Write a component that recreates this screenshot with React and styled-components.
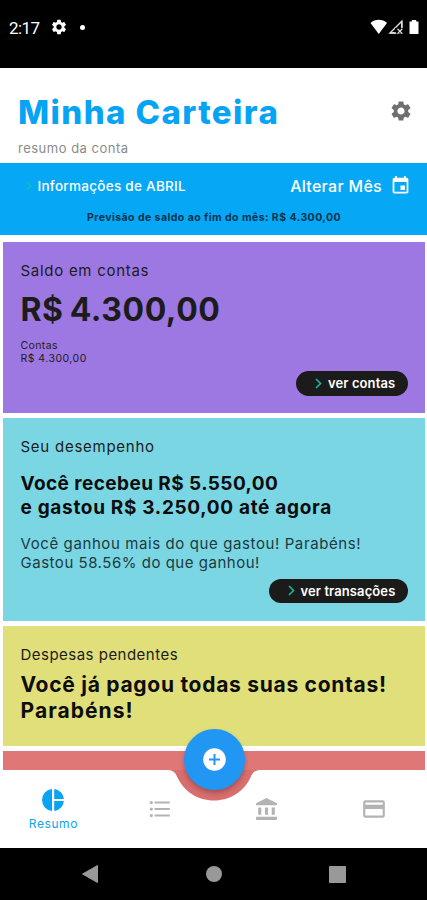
import React from 'react';
import styled, { createGlobalStyle } from 'styled-components';
import {
    MdSettings,
    MdEvent,
    MdFormatListBulleted,
    MdAccountBalance,
    MdCreditCard
} from 'react-icons/md';

const Chevron = ({ color = '#14b48f', width = 7, height = 11 }) => (
    <svg width={width} height={height} viewBox="0 0 7 11" fill="none">
        <path d="M1 1L5.5 5.5L1 10" stroke={color} strokeWidth="1.7"/>
    </svg>
)

const StatusIcons = () => (
    <svg width="52" height="18" viewBox="0 0 52 18">
        <path d="M1.500 5C6 0.800 13.500 0.800 18 5L9.750 16Z" fill="#fff"/>
        <path d="M21 15L32.800 3.200V15Z" fill="none" stroke="#ddd" strokeWidth="1.400"/>
        <path d="M26 15.500V10H34V15.500Z" fill="#000"/>
        <path d="M32.800 3.200V10M21 15H27" stroke="#ddd" strokeWidth="1.400"/>
        <path d="M28.500 10.800L33.300 15.600M33.300 10.800L28.500 15.600" stroke="#ddd" strokeWidth="1.300"/>
        <path d="M40.500 3.500H42.800V2H47.200V3.500H49.500V16H40.500Z" fill="#fff"/>
    </svg>
)

const PieIcon = () => (
    <svg width="22" height="22" viewBox="0 0 22 22" fill="currentColor">
        <path d="M10 0.050V21.950A11 11 0 0 1 10 0.050Z"/>
        <path d="M12.200 0.050A11 11 0 0 1 21.950 9.900H12.200Z"/>
        <path d="M12.200 12.100H21.950A11 11 0 0 1 12.200 21.950Z"/>
    </svg>
)

const PlusIcon = () => (
    <svg width="23" height="23" viewBox="0 0 23 23">
        <circle cx="11.500" cy="11.500" r="11.300" fill="#fff"/>
        <path d="M11.500 6V17M6 11.500H17" stroke="#2296f3" strokeWidth="2"/>
    </svg>
)

const Notch = () => (
    <NotchShape width="92" height="31" viewBox="0 0 92 31">
        <path d="M0 0H92C86 0.500 84.500 3 82.500 7.500C76 21.500 62 30.500 46 30.500C30 30.500 16 21.500 9.500 7.500C7.500 3 6 0.500 0 0Z" fill="#d96e6e"/>
    </NotchShape>
)

const App = () => (
    <Screen>
        <GlobalStyle/>
        <StatusBar>
            <Clock>2:17</Clock>
            <MdSettings size={18}/>
            <Dot/>
            <StatusIcons/>
        </StatusBar>

        <Header>
            <div>
                <Title>Minha Carteira</Title>
                <Subtitle>resumo da conta</Subtitle>
            </div>
            <MdSettings size={24} color="#6f6f6f"/>
        </Header>

        <MonthBar>
            <MonthRow>
                <Chevron color="#16bfa6" width={6} height={10}/>
                <MonthName>Informações de ABRIL</MonthName>
                <ChangeMonth>Alterar Mês</ChangeMonth>
                <MdEvent size={21}/>
            </MonthRow>
            <Forecast>Previsão de saldo ao fim do mês: R$ 4.300,00</Forecast>
        </MonthBar>

        <Cards>
            <Card color="#9d78e2" height={170.5}>
                <CardTitle spacing={0.72}>Saldo em contas</CardTitle>
                <Balance>R$ 4.300,00</Balance>
                <Account spacing={0.4}>Contas</Account>
                <Account spacing={0.47}>R$ 4.300,00</Account>
                <CardButton top={6} width={112}>
                    <Chevron/>
                    <ButtonText spacing={0.1}>ver contas</ButtonText>
                </CardButton>
            </Card>
            <Card color="#7bd6e3" height={202.5}>
                <CardTitle spacing={0.75}>Seu desempenho</CardTitle>
                <Performance>
                    <Strong size={19} spacing={0.42} line={24.5}>Você recebeu R$ 5.550,00</Strong>
                    <Strong size={19} spacing={0.68} line={24.5}>e gastou R$ 3.250,00 até agora</Strong>
                </Performance>
                <Detail spacing={0.6}>Você ganhou mais do que gastou! Parabéns!</Detail>
                <Detail spacing={0.52}>Gastou 58.56% do que ganhou!</Detail>
                <CardButton top={6.5} width={139.5}>
                    <Chevron/>
                    <ButtonText spacing={0.1}>ver transações</ButtonText>
                </CardButton>
            </Card>
            <Card color="#e0df7a" height={119.5}>
                <CardTitle spacing={0.48}>Despesas pendentes</CardTitle>
                <Pending>
                    <Strong size={21} spacing={0.72} line={26}>Você já pagou todas suas contas!</Strong>
                    <Strong size={21} spacing={1.05} line={26}>Parabéns!</Strong>
                </Pending>
            </Card>
            <Card color="#e07777" height={40}/>
        </Cards>

        <TabBar>
            <Notch/>
            <AddButton>
                <PlusIcon/>
            </AddButton>
            <Tab $active>
                <PieIcon/>
                <TabLabel>Resumo</TabLabel>
            </Tab>
            <Tab><MdFormatListBulleted size={26}/></Tab>
            <Tab><MdAccountBalance size={25}/></Tab>
            <Tab><MdCreditCard size={26}/></Tab>
        </TabBar>

        <SystemBar>
            <svg width="18" height="20" viewBox="0 0 18 20">
                <path d="M16.500 1.500V18.500L1.500 10Z" fill="#999" stroke="#999" strokeLinejoin="round"/>
            </svg>
            <Home/>
            <Recents/>
        </SystemBar>
    </Screen>
)

export default App

//////////////////////////////////////////////STYLING COMPONENTS BELOW///////////////////////////////////////////

const GlobalStyle = createGlobalStyle`
    * {
        box-sizing:border-box;
    }
    body {
        margin:0;
        background:#fff;
        font-family:Inter, sans-serif;
    }
    svg {
        display:block;
        flex-shrink:0;
    }
`

const Screen = styled.div`
    width:427px;
    height:900px;
    display:flex;
    flex-direction:column;
    overflow:hidden;
    white-space:nowrap;
    color:#1c1c1c;
`

const StatusBar = styled.div`
    height:67.5px;
    padding:18px 6px 0 9px;
    display:flex;
    align-items:flex-start;
    background:#000;
    color:#fff;
    svg:last-child {
        margin-left:auto;
    }
`

const Clock = styled.span`
    width:40.5px;
    font:400 17px/20px Roboto, sans-serif;
    letter-spacing:-0.6px;
`

const Dot = styled.span`
    width:5px;
    height:5px;
    margin:7px 0 0 12px;
    border-radius:50%;
    background:#fff;
`

const Header = styled.header`
    height:95px;
    padding:24.5px 14px 0 18px;
    display:flex;
    justify-content:space-between;
    align-items:flex-start;
    svg {
        margin-top:7px;
    }
`

const Title = styled.h1`
    margin:0;
    font-size:33px;
    line-height:40px;
    font-weight:800;
    letter-spacing:1.4px;
    color:#08a4f4;
`

const Subtitle = styled.p`
    margin:7px 0 0;
    font-size:13px;
    line-height:18px;
    letter-spacing:0.5px;
    color:#8b8b8b;
`

const MonthBar = styled.section`
    height:72.5px;
    padding-top:12.5px;
    background:#06a8f6;
    color:#fff;
`

const MonthRow = styled.div`
    height:21px;
    padding:0 16px 0 25.5px;
    display:flex;
    align-items:center;
`

const MonthName = styled.span`
    margin-left:6px;
    font-size:13.5px;
    font-weight:500;
    letter-spacing:0.28px;
`

const ChangeMonth = styled.span`
    margin-left:auto;
    margin-right:8px;
    font-size:16px;
    font-weight:500;
    letter-spacing:0.3px;
`

const Forecast = styled.p`
    margin:14px 0 0 1px;
    text-align:center;
    font-size:10.5px;
    line-height:16px;
    font-weight:700;
    letter-spacing:0.45px;
    color:#06314d;
`

const Cards = styled.main`
    flex:1;
    min-height:0;
    padding:7px 2px 0 3px;
    display:flex;
    flex-direction:column;
    gap:5.5px;
    overflow:hidden;
`

const Card = styled.section`
    height:${props => props.height}px;
    flex-shrink:0;
    padding:19px 17px 0 17.5px;
    background:${props => props.color};
`

const CardTitle = styled.h2`
    margin:0;
    font-size:15px;
    line-height:20px;
    font-weight:400;
    letter-spacing:${props => props.spacing}px;
`

const Balance = styled.p`
    margin:9px 0 9px;
    font-size:32px;
    line-height:40px;
    font-weight:700;
    letter-spacing:0.55px;
    word-spacing:-2px;
`

const Account = styled.p`
    margin:0;
    font-size:10.5px;
    line-height:13px;
    letter-spacing:${props => props.spacing}px;
`

const CardButton = styled.button`
    width:${props => props.width}px;
    height:24.5px;
    margin:${props => props.top}px 0 0 auto;
    padding:0 0 0 19px;
    display:flex;
    align-items:center;
    border:0;
    border-radius:13px;
    background:#1b1b1b;
    color:#fff;
    font-family:inherit;
`

const ButtonText = styled.span`
    margin-left:6px;
    font-size:13px;
    font-weight:600;
    letter-spacing:${props => props.spacing}px;
`

const Strong = styled.p`
    margin:0;
    font-size:${props => props.size}px;
    line-height:${props => props.line}px;
    font-weight:700;
    letter-spacing:${props => props.spacing}px;
    color:#0d0d0d;
`

const Performance = styled.div`
    margin:14.5px 0 13.5px;
`

const Detail = styled.p`
    margin:0;
    font-size:15px;
    line-height:19px;
    letter-spacing:${props => props.spacing}px;
    color:#1d3a40;
`

const Pending = styled.div`
    margin-top:7px;
`

const TabBar = styled.nav`
    position:relative;
    height:78px;
    display:grid;
    grid-template-columns:repeat(4, 1fr);
    background:#fff;
`

const NotchShape = styled.svg`
    position:absolute;
    top:0;
    left:168px;
`

const AddButton = styled.button`
    position:absolute;
    top:-41px;
    left:183.5px;
    width:61px;
    height:61px;
    padding:0;
    display:flex;
    align-items:center;
    justify-content:center;
    border:0;
    border-radius:50%;
    background:#2296f3;
    color:#fff;
    box-shadow:0 3px 5px rgba(0,0,0,0.25);
`

const Tab = styled.a`
    display:flex;
    flex-direction:column;
    align-items:center;
    justify-content:center;
    padding-top:${props => props.$active ? 3 : 0}px;
    color:${props => props.$active ? '#0ba3f3' : '#b3b3b3'};
`

const TabLabel = styled.span`
    margin-top:5px;
    font-size:12px;
    line-height:16px;
    letter-spacing:0.6px;
`

const SystemBar = styled.footer`
    height:52px;
    padding:0 81.5px 0 81px;
    display:flex;
    align-items:center;
    justify-content:space-between;
    background:#000;
`

const Home = styled.span`
    width:16px;
    height:16px;
    border-radius:50%;
    background:#999;
`

const Recents = styled.span`
    width:17px;
    height:17px;
    border-radius:1px;
    background:#999;
`
